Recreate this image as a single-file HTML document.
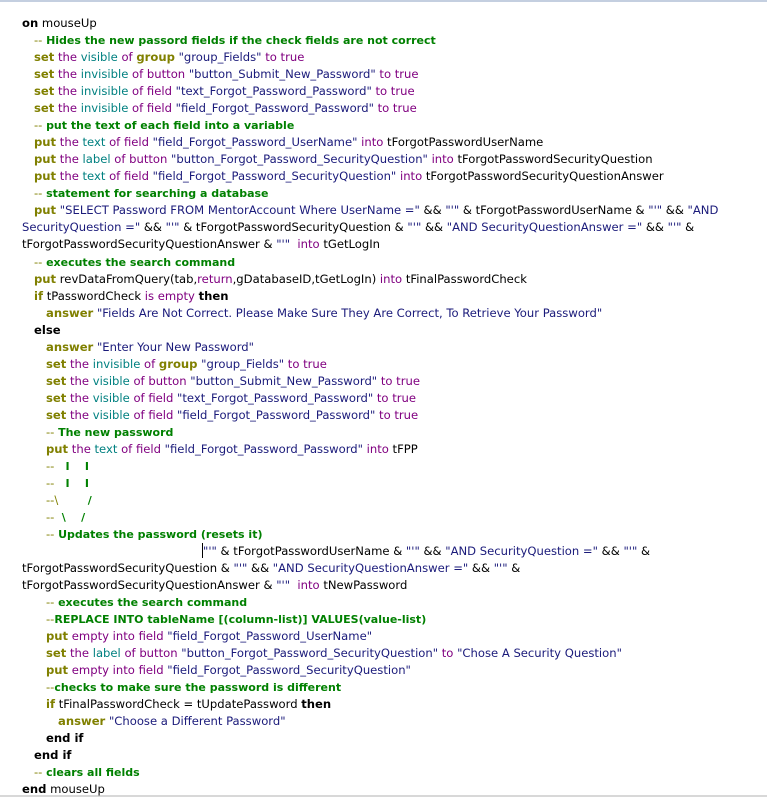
<!DOCTYPE html>
<html><head><meta charset="utf-8"><style>
html,body{margin:0;padding:0;background:#fff;}
body{width:767px;height:797px;position:relative;overflow:hidden;font-family:"DejaVu Sans","Liberation Sans",sans-serif;font-size:11.6px;color:#000;}
.top{position:absolute;left:0;top:0;width:767px;height:2px;background:#c4cfe0;}
.bot{position:absolute;left:0;bottom:0;width:767px;height:2px;background:#d8d8d8;}
.l{position:absolute;white-space:pre;line-height:17px;height:17px;}
.k{color:#808000;font-weight:bold}
.b{font-weight:bold;color:#000}
.p{color:#800080}
.t{color:#008080}
.s{color:#1a1a7a}
.c{color:#008000;font-weight:bold;font-size:11px}
.cd{color:#808000}
.cur{display:inline-block;width:1px;height:15px;background:#000;vertical-align:-3px;}
</style></head><body>
<div class="top"></div><div class="bot"></div>
<div class="l" style="left:22px;top:15px"><span class="b">on</span> mouseUp</div>
<div class="l" style="left:34px;top:32px"><span class="cd">--</span> <span class="c">Hides the new passord fields if the check fields are not correct</span></div>
<div class="l" style="left:34px;top:49px"><span class="k">set</span> <span class="p">the</span> <span class="t">visible</span> <span class="p">of</span> <span class="k">group</span> <span class="s">"group_Fields"</span> <span class="p">to true</span></div>
<div class="l" style="left:34px;top:66px"><span class="k">set</span> <span class="p">the</span> <span class="t">invisible</span> <span class="p">of button</span> <span class="s">"button_Submit_New_Password"</span> <span class="p">to true</span></div>
<div class="l" style="left:34px;top:83px"><span class="k">set</span> <span class="p">the</span> <span class="t">invisible</span> <span class="p">of field</span> <span class="s">"text_Forgot_Password_Password"</span> <span class="p">to true</span></div>
<div class="l" style="left:34px;top:100px"><span class="k">set</span> <span class="p">the</span> <span class="t">invisible</span> <span class="p">of field</span> <span class="s">"field_Forgot_Password_Password"</span> <span class="p">to true</span></div>
<div class="l" style="left:34px;top:117px"><span class="cd">--</span> <span class="c">put the text of each field into a variable</span></div>
<div class="l" style="left:34px;top:134px"><span class="k">put</span> <span class="p">the</span> <span class="t">text</span> <span class="p">of field</span> <span class="s">"field_Forgot_Password_UserName"</span> <span class="p">into</span> tForgotPasswordUserName</div>
<div class="l" style="left:34px;top:151px"><span class="k">put</span> <span class="p">the</span> <span class="t">label</span> <span class="p">of button</span> <span class="s">"button_Forgot_Password_SecurityQuestion"</span> <span class="p">into</span> tForgotPasswordSecurityQuestion</div>
<div class="l" style="left:34px;top:168px"><span class="k">put</span> <span class="p">the</span> <span class="t">text</span> <span class="p">of field</span> <span class="s">"field_Forgot_Password_SecurityQuestion"</span> <span class="p">into</span> tForgotPasswordSecurityQuestionAnswer</div>
<div class="l" style="left:34px;top:185px"><span class="cd">--</span> <span class="c">statement for searching a database</span></div>
<div class="l" style="left:34px;top:202px"><span class="k">put</span> <span class="s">"SELECT Password FROM MentorAccount Where UserName ="</span> &amp;&amp; <span class="s">"'"</span> &amp; tForgotPasswordUserName &amp; <span class="s">"'"</span> &amp;&amp; <span class="s">"AND</span></div>
<div class="l" style="left:22px;top:219px"><span class="s">SecurityQuestion ="</span> &amp;&amp; <span class="s">"'"</span> &amp; tForgotPasswordSecurityQuestion &amp; <span class="s">"'"</span> &amp;&amp; <span class="s">"AND SecurityQuestionAnswer ="</span> &amp;&amp; <span class="s">"'"</span> &amp;</div>
<div class="l" style="left:22px;top:236px">tForgotPasswordSecurityQuestionAnswer &amp; <span class="s">"'"</span>  <span class="p">into</span> tGetLogIn</div>
<div class="l" style="left:34px;top:254px"><span class="cd">--</span> <span class="c">executes the search command</span></div>
<div class="l" style="left:34px;top:271px"><span class="k">put</span> revDataFromQuery(tab,<span class="p">return</span>,gDatabaseID,tGetLogIn) <span class="p">into</span> tFinalPasswordCheck</div>
<div class="l" style="left:34px;top:288px"><span class="k">if</span> tPasswordCheck <span class="p">is empty</span> <span class="b">then</span></div>
<div class="l" style="left:46px;top:305px"><span class="k">answer</span> <span class="s">"Fields Are Not Correct. Please Make Sure They Are Correct, To Retrieve Your Password"</span></div>
<div class="l" style="left:34px;top:322px"><span class="b">else</span></div>
<div class="l" style="left:46px;top:339px"><span class="k">answer</span> <span class="s">"Enter Your New Password"</span></div>
<div class="l" style="left:46px;top:356px"><span class="k">set</span> <span class="p">the</span> <span class="t">invisible</span> <span class="p">of</span> <span class="k">group</span> <span class="s">"group_Fields"</span> <span class="p">to true</span></div>
<div class="l" style="left:46px;top:373px"><span class="k">set</span> <span class="p">the</span> <span class="t">visible</span> <span class="p">of button</span> <span class="s">"button_Submit_New_Password"</span> <span class="p">to true</span></div>
<div class="l" style="left:46px;top:390px"><span class="k">set</span> <span class="p">the</span> <span class="t">visible</span> <span class="p">of field</span> <span class="s">"text_Forgot_Password_Password"</span> <span class="p">to true</span></div>
<div class="l" style="left:46px;top:407px"><span class="k">set</span> <span class="p">the</span> <span class="t">visible</span> <span class="p">of field</span> <span class="s">"field_Forgot_Password_Password"</span> <span class="p">to true</span></div>
<div class="l" style="left:46px;top:424px"><span class="cd">--</span> <span class="c">The new password</span></div>
<div class="l" style="left:46px;top:441px"><span class="k">put</span> <span class="p">the</span> <span class="t">text</span> <span class="p">of field</span> <span class="s">"field_Forgot_Password_Password"</span> <span class="p">into</span> tFPP</div>
<div class="l" style="left:46px;top:458px"><span class="cd">--</span>   <span class="c">I    I</span></div>
<div class="l" style="left:46px;top:475px"><span class="cd">--</span>   <span class="c">I    I</span></div>
<div class="l" style="left:46px;top:492px"><span class="cd">--\</span>        <span class="c">/</span></div>
<div class="l" style="left:46px;top:509px"><span class="cd">--</span>  <span class="c">\    /</span></div>
<div class="l" style="left:46px;top:526px"><span class="cd">--</span> <span class="c">Updates the password (resets it)</span></div>
<div class="l" style="left:202px;top:543px"><span class="cur"></span><span class="s">"'"</span> &amp; tForgotPasswordUserName &amp; <span class="s">"'"</span> &amp;&amp; <span class="s">"AND SecurityQuestion ="</span> &amp;&amp; <span class="s">"'"</span> &amp;</div>
<div class="l" style="left:22px;top:560px">tForgotPasswordSecurityQuestion &amp; <span class="s">"'"</span> &amp;&amp; <span class="s">"AND SecurityQuestionAnswer ="</span> &amp;&amp; <span class="s">"'"</span> &amp;</div>
<div class="l" style="left:22px;top:577px">tForgotPasswordSecurityQuestionAnswer &amp; <span class="s">"'"</span>  <span class="p">into</span> tNewPassword</div>
<div class="l" style="left:46px;top:594px"><span class="cd">--</span> <span class="c">executes the search command</span></div>
<div class="l" style="left:46px;top:611px"><span class="cd">--</span><span class="c">REPLACE INTO tableName [(column-list)] VALUES(value-list)</span></div>
<div class="l" style="left:46px;top:628px"><span class="k">put</span> <span class="p">empty into field</span> <span class="s">"field_Forgot_Password_UserName"</span></div>
<div class="l" style="left:46px;top:645px"><span class="k">set</span> <span class="p">the</span> <span class="t">label</span> <span class="p">of button</span> <span class="s">"button_Forgot_Password_SecurityQuestion"</span> <span class="p">to</span> <span class="s">"Chose A Security Question"</span></div>
<div class="l" style="left:46px;top:662px"><span class="k">put</span> <span class="p">empty into field</span> <span class="s">"field_Forgot_Password_SecurityQuestion"</span></div>
<div class="l" style="left:46px;top:679px"><span class="cd">--</span><span class="c">checks to make sure the password is different</span></div>
<div class="l" style="left:46px;top:696px"><span class="k">if</span> tFinalPasswordCheck = tUpdatePassword <span class="b">then</span></div>
<div class="l" style="left:58px;top:713px"><span class="k">answer</span> <span class="s">"Choose a Different Password"</span></div>
<div class="l" style="left:46px;top:730px"><span class="b">end if</span></div>
<div class="l" style="left:34px;top:747px"><span class="b">end if</span></div>
<div class="l" style="left:34px;top:764px"><span class="cd">--</span> <span class="c">clears all fields</span></div>
<div class="l" style="left:22px;top:781px"><span class="b">end</span> mouseUp</div>
</body></html>
